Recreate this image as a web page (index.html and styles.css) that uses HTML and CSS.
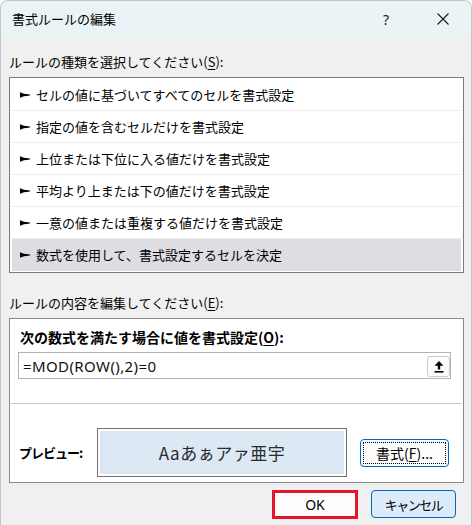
FILE: index.html
```html
<!DOCTYPE html>
<html lang="ja">
<head>
<meta charset="utf-8">
<title>書式ルールの編集</title>
<link rel="stylesheet" href="styles.css">
</head>
<body>
<div class="win">
  <div class="titlebar">
    <span class="title">書式ルールの編集</span>
    <span class="tb-btn help">?</span>
    <span class="tb-btn close">
      <svg width="12" height="12" viewBox="0 0 12 12"><path d="M0.5 0.5 L11.5 11.5 M11.5 0.5 L0.5 11.5" stroke="#1a1a1a" stroke-width="1.1" fill="none"/></svg>
    </span>
  </div>
  <div class="content">
    <div class="label first">ルールの種類を選択してください(<u>S</u>):</div>
    <div class="list">
      <div class="row"><svg class="arrow" width="10" height="6" viewBox="0 0 10 6"><path d="M0 0.3 L4 1.8 L10 2.4 L10 3.6 L4 4.2 L0 5.7 Z" fill="#000"/></svg><span>セルの値に基づいてすべてのセルを書式設定</span></div>
      <div class="row"><svg class="arrow" width="10" height="6" viewBox="0 0 10 6"><path d="M0 0.3 L4 1.8 L10 2.4 L10 3.6 L4 4.2 L0 5.7 Z" fill="#000"/></svg><span>指定の値を含むセルだけを書式設定</span></div>
      <div class="row"><svg class="arrow" width="10" height="6" viewBox="0 0 10 6"><path d="M0 0.3 L4 1.8 L10 2.4 L10 3.6 L4 4.2 L0 5.7 Z" fill="#000"/></svg><span>上位または下位に入る値だけを書式設定</span></div>
      <div class="row"><svg class="arrow" width="10" height="6" viewBox="0 0 10 6"><path d="M0 0.3 L4 1.8 L10 2.4 L10 3.6 L4 4.2 L0 5.7 Z" fill="#000"/></svg><span>平均より上または下の値だけを書式設定</span></div>
      <div class="row"><svg class="arrow" width="10" height="6" viewBox="0 0 10 6"><path d="M0 0.3 L4 1.8 L10 2.4 L10 3.6 L4 4.2 L0 5.7 Z" fill="#000"/></svg><span>一意の値または重複する値だけを書式設定</span></div>
      <div class="row selected"><svg class="arrow" width="10" height="6" viewBox="0 0 10 6"><path d="M0 0.3 L4 1.8 L10 2.4 L10 3.6 L4 4.2 L0 5.7 Z" fill="#000"/></svg><span>数式を使用して、書式設定するセルを決定</span></div>
    </div>
    <div class="label second">ルールの内容を編集してください(<u>E</u>):</div>
    <div class="group">
      <div class="bold-label">次の数式を満たす場合に値を書式設定(<u>O</u>):</div>
      <div class="input">
        <span class="formula">=MOD(ROW(),2)=0</span>
        <span class="up-btn">
          <svg width="10" height="12" viewBox="0 0 10 12"><path d="M5 0 L9.5 4.8 L6.2 4.8 L6.2 8.6 L3.8 8.6 L3.8 4.8 L0.5 4.8 Z" fill="#000"/><rect x="0.5" y="10" width="9" height="1.6" fill="#000"/></svg>
        </span>
      </div>
      <div class="sep"></div>
      <div class="preview-row">
        <span class="preview-label">プレビュー:</span>
        <div class="preview-box"><div class="preview-fill">Aaあぁアァ亜宇</div></div>
        <div class="fmt-btn"><span class="focus">書式(<u>F</u>)...</span></div>
      </div>
    </div>
    <div class="buttons">
      <div class="btn ok">OK</div>
      <div class="btn cancel">キャンセル</div>
    </div>
  </div>
</div>
</body>
</html>
```
FILE: styles.css
```css
* { box-sizing: border-box; }
html, body { margin: 0; padding: 0; background: #ffffff; }
body {
  font-family: "Noto Sans CJK JP", "Noto Sans", sans-serif;
  font-size: 13px;
  color: #000;
}
u { text-decoration: underline; text-underline-offset: 2px; text-decoration-thickness: 1px; }

.win {
  width: 472px;
  height: 525px;
  border: 1px solid #c4c4c4;
  border-bottom: none;
  border-radius: 8px 8px 0 0;
  overflow: hidden;
  background: #f0f0f0;
}

.titlebar {
  height: 36px;
  background: #eaf4f7;
  display: flex;
  align-items: center;
  padding-left: 11px;
}
.title { font-size: 13px; line-height: 18px; flex: 1; }
.tb-btn {
  height: 36px;
  display: flex;
  align-items: center;
  justify-content: center;
}
.help { width: 56px; font-family: "Noto Sans", sans-serif; font-size: 14px; color: #1a1a1a; }
.close { width: 57px; }

.content { padding: 0 7px 0 8px; }

.label { line-height: 18px; height: 18px; white-space: nowrap; }
.label.first { margin-top: 16px; margin-bottom: 6px; }
.label.second { margin-top: 21px; margin-bottom: 6px; }

.list {
  width: 455px;
  border: 1px solid #7a7a7a;
  background: #fff;
  padding: 1px 2px;
}
.row {
  height: 32px;
  border-bottom: 1px solid #ececec;
  display: flex;
  align-items: center;
  padding-left: 8px;
  white-space: nowrap;
  line-height: 18px;
}
.row.selected { background: #dedde3; border-bottom-color: #dedde3; }
.arrow { margin-right: 6px; flex: none; }

.group {
  width: 455px;
  height: 165px;
  border: 1px solid #8a8a8a;
  background: #fff;
  padding-top: 9px;
}
.bold-label {
  font-size: 14px;
  font-weight: bold;
  line-height: 18px;
  margin-left: 10px;
  white-space: nowrap;
}
.input {
  margin-top: 6px;
  margin-left: 8px;
  width: 433px;
  height: 27px;
  border: 1px solid #b2b2b2;
  display: flex;
  align-items: center;
  padding-left: 4px;
}
.formula {
  flex: 1;
  font-family: "Noto Sans", sans-serif;
  font-size: 15px;
  letter-spacing: 0.4px;
  line-height: 20px;
  color: #111;
}
.up-btn {
  width: 23px;
  height: 21px;
  margin-top: 2px;
  border: 1px solid #cbcbcb;
  border-radius: 3px;
  background: #fcfcfc;
  display: flex;
  align-items: center;
  justify-content: center;
}

.sep {
  margin: 24px 1px 0 1px;
  height: 1px;
  background: #c9c9c9;
}

.preview-row {
  margin-top: 24px;
  height: 49px;
  display: flex;
  align-items: center;
}
.preview-label {
  width: 87px;
  padding-left: 9px;
  font-weight: bold;
  font-size: 13px;
  letter-spacing: -1px;
  white-space: nowrap;
}
.preview-box {
  width: 250px;
  height: 49px;
  border: 1px solid #707070;
  padding: 2px;
  background: #fff;
}
.preview-fill {
  height: 100%;
  background: #dce9f5;
  display: flex;
  align-items: center;
  justify-content: center;
  font-size: 17px;
  letter-spacing: 0.5px;
  color: #2b2b2b;
}
.fmt-btn {
  margin-left: 13px;
  width: 89px;
  height: 28px;
  border: 1px solid #0067c0;
  border-radius: 4px;
  background: #fdfdfd;
  padding: 2px;
}
.focus {
  display: flex;
  width: 100%;
  height: 100%;
  align-items: center;
  justify-content: center;
  border: 1px dotted #000;
  font-size: 14px;
  line-height: 18px;
}

.buttons {
  margin-top: 7px;
  display: flex;
  justify-content: flex-end;
  gap: 13px;
  padding-right: 8px;
  align-items: flex-start;
}
.btn {
  display: flex;
  align-items: center;
  justify-content: center;
}
.ok {
  width: 86px;
  height: 29px;
  border: 3px solid #e5142a;
  background: #fdfdfd;
  font-family: "Noto Sans", sans-serif;
  font-size: 14px;
}
.cancel {
  width: 85px;
  height: 28px;
  border: 1px solid #0067c0;
  border-radius: 4px;
  background: #dcebfc;
  font-size: 13px;
  letter-spacing: -1.5px;
}
```
